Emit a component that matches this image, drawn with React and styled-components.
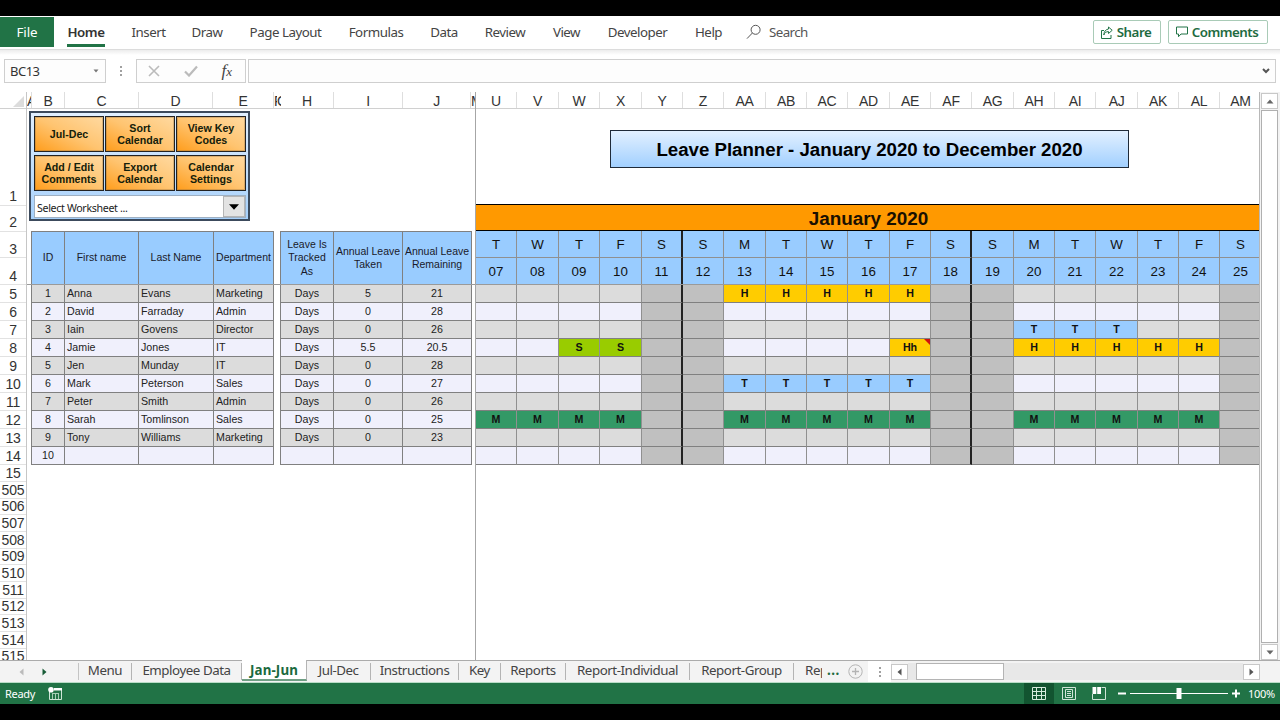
import React from 'react';
import styled, { createGlobalStyle } from 'styled-components';

const ui = '"Noto Sans", "Open Sans", sans-serif';
const sheet = '"Liberation Sans", Arial, sans-serif';

const ribbonTabs = [
    { label: 'Home', width: 38, active: true },
    { label: 'Insert', width: 31 },
    { label: 'Draw', width: 30 },
    { label: 'Page Layout', width: 71 },
    { label: 'Formulas', width: 54 },
    { label: 'Data', width: 26 },
    { label: 'Review', width: 40 },
    { label: 'View', width: 27 },
    { label: 'Developer', width: 59 },
    { label: 'Help', width: 27 },
];

const leftColumns = [
    ['A', 5], ['B', 33], ['C', 74], ['D', 74], ['E', 61], ['F', 3], ['G', 4],
    ['H', 53], ['I', 69], ['J', 68], ['M', 5],
];

const days = [
    { col: 'U', day: 'T', date: '07', width: 41 },
    { col: 'V', day: 'W', date: '08', width: 42 },
    { col: 'W', day: 'T', date: '09', width: 41 },
    { col: 'X', day: 'F', date: '10', width: 42 },
    { col: 'Y', day: 'S', date: '11', width: 41, off: true, weekEnd: true },
    { col: 'Z', day: 'S', date: '12', width: 41, off: true },
    { col: 'AA', day: 'M', date: '13', width: 42 },
    { col: 'AB', day: 'T', date: '14', width: 41 },
    { col: 'AC', day: 'W', date: '15', width: 41 },
    { col: 'AD', day: 'T', date: '16', width: 42 },
    { col: 'AE', day: 'F', date: '17', width: 41 },
    { col: 'AF', day: 'S', date: '18', width: 41, off: true, weekEnd: true },
    { col: 'AG', day: 'S', date: '19', width: 42, off: true },
    { col: 'AH', day: 'M', date: '20', width: 41 },
    { col: 'AI', day: 'T', date: '21', width: 41 },
    { col: 'AJ', day: 'W', date: '22', width: 42 },
    { col: 'AK', day: 'T', date: '23', width: 41 },
    { col: 'AL', day: 'F', date: '24', width: 41 },
    { col: 'AM', day: 'S', date: '25', width: 42, off: true },
];

const employees = [
    { first: 'Anna', last: 'Evans', dept: 'Marketing', taken: '5', left: '21', leave: { 13: 'H', 14: 'H', 15: 'H', 16: 'H', 17: 'H' } },
    { first: 'David', last: 'Farraday', dept: 'Admin', taken: '0', left: '28' },
    { first: 'Iain', last: 'Govens', dept: 'Director', taken: '0', left: '26', leave: { 20: 'T', 21: 'T', 22: 'T' } },
    { first: 'Jamie', last: 'Jones', dept: 'IT', taken: '5.5', left: '20.5', leave: { '09': 'S', 10: 'S', 17: 'Hh', 20: 'H', 21: 'H', 22: 'H', 23: 'H', 24: 'H' } },
    { first: 'Jen', last: 'Munday', dept: 'IT', taken: '0', left: '28' },
    { first: 'Mark', last: 'Peterson', dept: 'Sales', taken: '0', left: '27', leave: { 13: 'T', 14: 'T', 15: 'T', 16: 'T', 17: 'T' } },
    { first: 'Peter', last: 'Smith', dept: 'Admin', taken: '0', left: '26' },
    {
        first: 'Sarah', last: 'Tomlinson', dept: 'Sales', taken: '0', left: '25',
        leave: {
            '07': 'M', '08': 'M', '09': 'M', 10: 'M', 13: 'M', 14: 'M', 15: 'M',
            16: 'M', 17: 'M', 20: 'M', 21: 'M', 22: 'M', 23: 'M', 24: 'M',
        },
    },
    { first: 'Tony', last: 'Williams', dept: 'Marketing', taken: '0', left: '23' },
    {},
];

const leaveColors = { H: '#ffcc00', Hh: '#ffcc00', T: '#99ccff', S: '#99cc00', M: '#339966' };

const rowHeights = [
    ['1', 97, 1], ['2', 26, 1], ['3', 26], ['4', 27],
    ...Array.from({ length: 10 }, (_, i) => [String(i + 5), 18]),
    ['15', 17],
    ...Array.from({ length: 11 }, (_, i) => [String(i + 505), 16.67]),
];

const sheetTabs = [
    { label: 'Menu', width: 53 },
    { label: 'Employee Data', width: 110 },
    { label: 'Jan-Jun', width: 65, active: true },
    { label: 'Jul-Dec', width: 64 },
    { label: 'Instructions', width: 88 },
    { label: 'Key', width: 42 },
    { label: 'Reports', width: 65 },
    { label: 'Report-Individual', width: 124 },
    { label: 'Report-Group', width: 104 },
];

const macros = [
    ['Jul-Dec'], ['Sort', 'Calendar'], ['View Key', 'Codes'],
    ['Add / Edit', 'Comments'], ['Export', 'Calendar'], ['Calendar', 'Settings'],
];

const App = () => {
    return (
        <Window>
            <GlobalStyle />
            <Ribbon>
                <FileTab>File</FileTab>
                {ribbonTabs.map(tab => (
                    <RibbonTab key={tab.label} $width={tab.width} $active={tab.active}>{tab.label}</RibbonTab>
                ))}
                <Search>
                    <svg width="16" height="16" viewBox="0 0 16 16" fill="none" stroke="#555" strokeWidth="1">
                        <circle cx="9.6" cy="5.8" r="4.5" />
                        <path d="M6.4 9 L1 14.6" />
                    </svg>
                    Search
                </Search>
                <RibbonButton $width={68}>
                    <svg width="12" height="13" viewBox="0 0 12 13" fill="none" stroke="#217346" strokeWidth="1">
                        <path d="M3 4.5H.5v8h9.500V9" />
                        <path d="M7.500 1l3.700 3.300-3.700 3.200V5.600C5 5.600 3.600 6.800 2.800 9c.2-3.400 1.800-5.600 4.700-6z" />
                    </svg>
                    Share
                </RibbonButton>
                <RibbonButton $width={100}>
                    <svg width="12" height="12" viewBox="0 0 12 12" fill="none" stroke="#217346" strokeWidth="1">
                        <path d="M.5 1h11v7H5L2.500 10.700V8H.5z" />
                    </svg>
                    Comments
                </RibbonButton>
            </Ribbon>

            <FormulaBar>
                <NameBox>
                    BC13
                    <svg width="6" height="4" viewBox="0 0 6 4"><path d="M.5.500h5L3 3.500z" fill="#777" /></svg>
                </NameBox>
                <Dots><i /><i /><i /></Dots>
                <FormulaButtons>
                    <svg width="12" height="12" viewBox="0 0 12 12"><path d="M1 1l10 10M11 1L1 11" stroke="#bbb" strokeWidth="1.600" /></svg>
                    <svg width="14" height="12" viewBox="0 0 14 12"><path d="M1 6.500l4 4L13 1.500" fill="none" stroke="#bbb" strokeWidth="2.200" /></svg>
                    <Fx>f<small>x</small></Fx>
                </FormulaButtons>
                <FormulaInput>
                    <svg width="8" height="6" viewBox="0 0 8 6"><path d="M1 1l3 3 3-3" fill="none" stroke="#555" strokeWidth="2" /></svg>
                </FormulaInput>
            </FormulaBar>

            <Workbook>
                <RowHeaders>
                    <Corner>
                        <svg width="11" height="11" viewBox="0 0 11 11"><path d="M11 0v11H0z" fill="#dcdcdc" /></svg>
                    </Corner>
                    {rowHeights.map(([label, height, lift]) => (
                        <RowHeader key={label} $height={height} $lift={lift}>{label}</RowHeader>
                    ))}
                </RowHeaders>

                <LeftPane>
                    <ColumnHeaders>
                        {leftColumns.map(([label, width]) => (
                            <ColumnHeader key={label} $width={width}>{label}</ColumnHeader>
                        ))}
                    </ColumnHeaders>
                    <FrozenArea>
                        <ControlPanel>
                            <MacroGrid>
                                {macros.map(lines => (
                                    <MacroButton key={lines.join()}>
                                        {lines.map(line => <span key={line}>{line}</span>)}
                                    </MacroButton>
                                ))}
                            </MacroGrid>
                            <Combo>
                                <span>Select Worksheet ...</span>
                                <ComboArrow>
                                    <svg width="10" height="6" viewBox="0 0 10 6"><path d="M0 .300h10L5 5.700z" fill="#000" /></svg>
                                </ComboArrow>
                            </Combo>
                        </ControlPanel>
                        <Tables>
                            <StaffGrid>
                                <HeadCell>ID</HeadCell>
                                <HeadCell>First name</HeadCell>
                                <HeadCell>Last Name</HeadCell>
                                <HeadCell>Department</HeadCell>
                            </StaffGrid>
                            <AllowanceGrid>
                                <HeadCell>Leave Is<br />Tracked<br />As</HeadCell>
                                <HeadCell>Annual Leave<br />Taken</HeadCell>
                                <HeadCell>Annual Leave<br />Remaining</HeadCell>
                            </AllowanceGrid>
                        </Tables>
                    </FrozenArea>
                    {employees.map((person, i) => (
                        <Tables key={i}>
                            <StaffGrid>
                                <Cell $alt={i % 2} $center>{i + 1}</Cell>
                                <Cell $alt={i % 2}>{person.first}</Cell>
                                <Cell $alt={i % 2}>{person.last}</Cell>
                                <Cell $alt={i % 2}>{person.dept}</Cell>
                            </StaffGrid>
                            <AllowanceGrid>
                                <Cell $alt={i % 2} $center>{person.first && 'Days'}</Cell>
                                <Cell $alt={i % 2} $center>{person.taken}</Cell>
                                <Cell $alt={i % 2} $center>{person.left}</Cell>
                            </AllowanceGrid>
                        </Tables>
                    ))}
                </LeftPane>

                <CalendarPane>
                    <ColumnHeaders>
                        {days.map(d => <ColumnHeader key={d.col} $width={d.width}>{d.col}</ColumnHeader>)}
                    </ColumnHeaders>
                    <FrozenArea>
                        <TitleArea>
                            <Title>Leave Planner - January 2020 to December 2020</Title>
                        </TitleArea>
                        <Month>January 2020</Month>
                        <Row>
                            {days.map(d => <DayHead key={d.col} $width={d.width} $weekEnd={d.weekEnd} $line>{d.day}</DayHead>)}
                        </Row>
                        <Row>
                            {days.map(d => <DayHead key={d.col} $width={d.width} $weekEnd={d.weekEnd}>{d.date}</DayHead>)}
                        </Row>
                    </FrozenArea>
                    {employees.map((person, i) => (
                        <Row key={i}>
                            {days.map(d => {
                                const code = person.leave?.[d.date];
                                return (
                                    <DayCell key={d.col} $width={d.width} $alt={i % 2} $off={d.off} $weekEnd={d.weekEnd} $color={leaveColors[code]}>
                                        {code}
                                        {code === 'Hh' && <CommentMark />}
                                    </DayCell>
                                );
                            })}
                        </Row>
                    ))}
                </CalendarPane>

                <VerticalScroll>
                    <ScrollButton>
                        <svg width="8" height="5" viewBox="0 0 8 5"><path d="M4 .500L7.500 4.500h-7z" fill="#666" /></svg>
                    </ScrollButton>
                    <VerticalThumb />
                    <ScrollButton>
                        <svg width="8" height="5" viewBox="0 0 8 5"><path d="M4 4.500L7.500.500h-7z" fill="#666" /></svg>
                    </ScrollButton>
                </VerticalScroll>
            </Workbook>

            <TabStrip>
                <TabArrows>
                    <svg width="5" height="8" viewBox="0 0 5 8"><path d="M4.500.500v7L.5 4z" fill="#bbb" /></svg>
                    <svg width="5" height="8" viewBox="0 0 5 8"><path d="M.5.500v7L4.500 4z" fill="#185c37" /></svg>
                </TabArrows>
                {sheetTabs.map(tab => (
                    <SheetTab key={tab.label} $width={tab.width} $active={tab.active}>{tab.label}</SheetTab>
                ))}
                <CutTab>Rep</CutTab>
                <More>...</More>
                <AddSheet>
                    <svg width="15" height="15" viewBox="0 0 15 15" fill="none" stroke="#b4b4b4">
                        <circle cx="7.500" cy="7.500" r="6.700" />
                        <path d="M7.500 4v7M4 7.500h7" strokeWidth="1.300" />
                    </svg>
                </AddSheet>
                <ScrollSplit><Dots $tight><i /><i /><i /></Dots></ScrollSplit>
                <ScrollButton>
                    <svg width="5" height="8" viewBox="0 0 5 8"><path d="M4.500.500v7L.5 4z" fill="#555" /></svg>
                </ScrollButton>
                <HorizontalTrack><HorizontalThumb /></HorizontalTrack>
                <ScrollButton>
                    <svg width="5" height="8" viewBox="0 0 5 8"><path d="M.5.500v7L4.500 4z" fill="#555" /></svg>
                </ScrollButton>
            </TabStrip>

            <StatusBar>
                <Ready>Ready</Ready>
                <svg width="15" height="13" viewBox="0 0 15 13">
                    <path d="M1.500 5v7.500h12V1.500H6" fill="none" stroke="#cfe5d7" />
                    <path d="M6 1h8v2.500H6z" fill="#fff" />
                    <path d="M4 6.500h7M4.500 6v6M7.500 6v6M10.500 6v6" stroke="#a5cdb4" />
                    <circle cx="3" cy="2.800" r="2.800" fill="#fff" />
                </svg>
                <Views>
                    <ViewButton $active>
                        <svg width="14" height="13" viewBox="0 0 14 13" fill="none" stroke="#d6ebdd">
                            <path d="M.5.500h13v12H.5zM4.500.500v12M9.500.500v12M.5 4.500h13M.5 8.500h13" />
                        </svg>
                    </ViewButton>
                    <ViewButton>
                        <svg width="14" height="13" viewBox="0 0 14 13" fill="none" stroke="#cfe5d7">
                            <path d="M.5.500h13v12H.5zM3.500 2.500h7v8h-7zM5 4.500h4M5 6.500h4M5 8.500h4" />
                        </svg>
                    </ViewButton>
                    <ViewButton>
                        <svg width="14" height="13" viewBox="0 0 14 13" fill="none" stroke="#cfe5d7">
                            <path d="M9.500.500h4v12H.5V7" />
                            <path d="M.5 0h3.800v7H.5zM5.200 0H9v7H5.200z" fill="#fff" stroke="none" />
                        </svg>
                    </ViewButton>
                </Views>
                <Zoom>
                    <svg width="124" height="14" viewBox="0 0 124 14" stroke="#fff">
                        <path d="M0 6.500h8M114 6.500h8M118 2.500v8" strokeWidth="2" />
                        <path d="M12 6.500h98" strokeWidth="1" />
                        <path d="M58.500 1h5v11h-5z" fill="#fff" stroke="none" />
                    </svg>
                    <span>100%</span>
                </Zoom>
            </StatusBar>
        </Window>
    )
}

export default App;

const GlobalStyle = createGlobalStyle`
  * {
    box-sizing: border-box;
  }
  body {
    margin: 0;
    background: #000;
  }
  svg {
    display: block;
    flex-shrink: 0;
  }
`;

const Window = styled.main`
  width: 1280px;
  height: 720px;
  padding: 16px 0;
  display: flex;
  flex-direction: column;
  overflow: hidden;
  background: #000;
  font-family: ${ui};
`;

const Ribbon = styled.header`
  height: 33px;
  flex-shrink: 0;
  display: flex;
  align-items: center;
  background: #fff;
  padding-right: 12px;
  color: #444;
  font-size: 13.33px;
  letter-spacing: -0.48px;
`;

const FileTab = styled.div`
  width: 54px;
  height: 30px;
  margin: 0 13px 1px 0;
  display: flex;
  align-items: center;
  justify-content: center;
  background: #217346;
  color: #fff;
  letter-spacing: -0.1px;
`;

const RibbonTab = styled.div`
  width: ${props => props.$width}px;
  height: 25px;
  margin: 4px 28px 0 0;
  flex-shrink: 0;
  display: flex;
  justify-content: center;
  white-space: nowrap;
  font-weight: ${props => props.$active ? 600 : 400};
  color: ${props => props.$active ? '#333' : '#444'};
  border-bottom: 3px solid ${props => props.$active ? '#217346' : 'transparent'};
  line-height: 19px;
  padding-top: 1px;
`;

const Search = styled.div`
  display: flex;
  align-items: center;
  gap: 7px;
  margin-right: auto;
  margin-left: -4px;
  padding-bottom: 1px;
  color: #555;
  letter-spacing: -0.6px;
`;

const RibbonButton = styled.button`
  width: ${props => props.$width}px;
  height: 24px;
  margin: 0 0 1px 7px;
  padding: 0 2px 0 0;
  display: flex;
  align-items: center;
  justify-content: center;
  gap: 4px;
  border: 1px solid #a9cbb7;
  border-radius: 2px;
  background: #fff;
  color: #1e6b41;
  font: 600 13.33px ${ui};
  letter-spacing: -0.5px;
`;

const FormulaBar = styled.div`
  height: 43px;
  flex-shrink: 0;
  display: flex;
  align-items: flex-start;
  padding: 9px 4px 0;
  border-top: 1px solid #dcdcdc;
  background: linear-gradient(#ececec, #fff 5px);
`;

const NameBox = styled.div`
  width: 102px;
  height: 24px;
  padding: 0 6px 0 5px;
  display: flex;
  align-items: center;
  justify-content: space-between;
  border: 1px solid #cfcfcf;
  background: #fdfdfd;
  color: #333;
  font-size: 13px;
  letter-spacing: -0.5px;
`;

const Dots = styled.div`
  width: ${props => props.$tight ? 2 : 30}px;
  height: ${props => props.$tight ? 10 : 24}px;
  display: flex;
  flex-direction: column;
  align-items: center;
  justify-content: center;
  gap: 2px;

  i {
    width: 2px;
    height: 2px;
    flex-shrink: 0;
    background: #a0a0a0;
  }
`;

const FormulaButtons = styled.div`
  width: 110px;
  height: 24px;
  padding: 0 13px 0 11px;
  display: flex;
  align-items: center;
  justify-content: space-between;
  border: 1px solid #cfcfcf;
  background: #fdfdfd;
`;

const Fx = styled.span`
  font: italic 17px/20px "Liberation Serif", serif;
  color: #444;

  small {
    font-size: 13px;
  }
`;

const FormulaInput = styled.div`
  flex: 1;
  height: 24px;
  margin-left: 2px;
  padding-right: 5px;
  display: flex;
  align-items: center;
  justify-content: flex-end;
  border: 1px solid #cfcfcf;
  background: #fdfdfd;
`;

const Workbook = styled.section`
  height: 568px;
  flex-shrink: 0;
  display: flex;
  background: #fff;
  overflow: hidden;
  font-family: ${sheet};
`;

const RowHeaders = styled.div`
  width: 27px;
  flex-shrink: 0;
  border-right: 1px solid #c6c6c6;
`;

const Corner = styled.div`
  height: 17px;
  display: flex;
  justify-content: flex-end;
  padding: 4px 2px 0 0;
  border-bottom: 1px solid #d0d0d0;
`;

const RowHeader = styled.div`
  height: ${props => props.$height}px;
  display: flex;
  align-items: flex-end;
  justify-content: center;
  line-height: 16px;
  padding-bottom: ${props => props.$lift || 0}px;
  font-size: 14px;
  letter-spacing: -0.2px;
  color: #333;
  border-bottom: 1px solid #e2e2e2;
`;

const LeftPane = styled.div`
  width: 449px;
  flex-shrink: 0;
  border-right: 1px solid #a6a6a6;
`;

const CalendarPane = styled.div`
  width: 784px;
  flex-shrink: 0;
  overflow: hidden;
  border-right: 1px solid #b8b8b8;
`;

const ColumnHeaders = styled.div`
  height: 17px;
  display: flex;
  overflow: hidden;
  border-bottom: 1px solid #d0d0d0;
`;

/* columns squeezed to a few pixels show only the start of their letter */
const ColumnHeader = styled.div`
  width: ${props => props.$width}px;
  flex-shrink: 0;
  overflow: hidden;
  display: flex;
  justify-content: ${props => props.$width < 10 ? 'flex-start' : 'center'};
  font-size: 14px;
  letter-spacing: -0.3px;
  line-height: 19px;
  color: #333;
  border-right: ${props => props.$width < 5 ? 'none' : '1px solid #dedede'};
`;

const FrozenArea = styled.div`
  height: 176px;
  display: flex;
  flex-direction: column;
  border-bottom: 1px solid #9a9a9a;
`;

const ControlPanel = styled.div`
  width: 221px;
  height: 110px;
  margin: 2px 0 10px 2px;
  padding: 3px 3px 1px;
  flex-shrink: 0;
  display: flex;
  flex-direction: column;
  justify-content: space-between;
  border: 2px solid #3c4a5c;
  background: linear-gradient(#e0efff, #a6d0fb);
`;

const MacroGrid = styled.div`
  display: grid;
  grid-template-columns: repeat(3, 70px);
  grid-auto-rows: 36px;
  gap: 3px 1px;
`;

const MacroButton = styled.button`
  padding: 0;
  display: flex;
  flex-direction: column;
  align-items: center;
  justify-content: center;
  border: 1px solid #222;
  box-shadow: inset 0 0 0 1px #8a6a3c55;
  background: linear-gradient(to top right, #ff9d1c, #ffc470 50%, #ffd9a0);
  color: #14200a;
  font: bold 10.67px/12px ${sheet};
`;

const Combo = styled.div`
  height: 23px;
  width: 212px;
  display: flex;
  align-items: center;
  justify-content: space-between;
  padding-left: 2px;
  border: 1px solid #9fb0c2;
  background: #fff;
  color: #222;
  font: 10.67px ${ui};
  letter-spacing: -0.35px;

  span {
    padding-top: 2px;
  }
`;

const ComboArrow = styled.div`
  width: 22px;
  height: 21px;
  display: flex;
  align-items: center;
  justify-content: center;
  border: 1px solid #b5b5b5;
  background: #e3e3e3;
`;

const Tables = styled.div`
  display: flex;
  gap: 6px;
  padding-left: 4px;
`;

const StaffGrid = styled.div`
  display: grid;
  grid-template-columns: 33px 74px 75px 60px;
  border-left: 1px solid #808080;
`;

const AllowanceGrid = styled.div`
  display: grid;
  grid-template-columns: 53px 69px 69px;
  border-left: 1px solid #808080;
`;

const HeadCell = styled.div`
  height: 53px;
  display: flex;
  align-items: center;
  justify-content: center;
  text-align: center;
  white-space: nowrap;
  font-size: 10.5px;
  line-height: 13.3px;
  color: #1a1a2a;
  background: #99ccff;
  border-top: 1px solid #808080;
  border-right: 1px solid #808080;
`;

const Cell = styled.div`
  height: 18px;
  padding-left: ${props => props.$center ? 0 : 2}px;
  text-align: ${props => props.$center ? 'center' : 'left'};
  font-size: 10.67px;
  line-height: 17px;
  color: #222;
  background: ${props => props.$alt ? '#f0f0fc' : '#dcdcdc'};
  border-right: 1px solid #808080;
  border-bottom: 1px solid #808080;
`;

const TitleArea = styled.div`
  height: 95px;
  flex-shrink: 0;
  padding: 21px 0 0 134px;
`;

const Title = styled.h1`
  width: 519px;
  height: 38px;
  margin: 0;
  text-align: center;
  font-size: 18.67px;
  line-height: 37px;
  color: #000;
  border: 1px solid #1f2a38;
  background: linear-gradient(#e2f0ff, #a2d0ff);
`;

const Month = styled.h2`
  height: 27px;
  flex-shrink: 0;
  margin: 0;
  text-align: center;
  font-size: 18.9px;
  line-height: 27px;
  padding-left: 2px;
  color: #1a1000;
  background: #ff9900;
  border-top: 1px solid #000;
  border-bottom: 1px solid #000;
`;

const Row = styled.div`
  display: flex;
`;

const DayBox = styled.div`
  width: ${props => props.$width}px;
  flex-shrink: 0;
  text-align: center;
  border-right: ${props => props.$weekEnd ? '2px solid #222' : '1px solid #909090'};
`;

const DayHead = styled(DayBox)`
  height: ${props => props.$line ? 27 : 26}px;
  font-size: 13.33px;
  line-height: 28px;
  color: #111;
  background: #99ccff;
  border-bottom: ${props => props.$line ? '1px solid #909090' : 'none'};
`;

const DayCell = styled(DayBox)`
  position: relative;
  height: 18px;
  font-size: 10.67px;
  line-height: 17px;
  font-weight: bold;
  color: #111;
  background: ${({ $color, $off, $alt }) => $color || ($off ? '#c0c0c0' : $alt ? '#f0f0fc' : '#dcdcdc')};
  border-bottom: 1px solid #808080;
`;

const CommentMark = styled.span`
  position: absolute;
  top: 0;
  right: 0;
  border-top: 6px solid #d01010;
  border-left: 6px solid transparent;
`;

const VerticalScroll = styled.div`
  flex: 1;
  padding: 1px 2px 0 1px;
  display: flex;
  flex-direction: column;
  gap: 1px;
  background: #f3f3f3;
`;

const ScrollButton = styled.div`
  width: 17px;
  height: 16px;
  flex-shrink: 0;
  display: flex;
  align-items: center;
  justify-content: center;
  border: 1px solid #c8c8c8;
  background: #fff;
`;

const VerticalThumb = styled.div`
  width: 17px;
  flex: 1;
  border: 1px solid #b0b0b0;
  background: #fff;
`;

const TabStrip = styled.nav`
  height: 23px;
  flex-shrink: 0;
  display: flex;
  align-items: center;
  border-top: 1px solid #ababab;
  border-bottom: 1px solid #b9dcc7;
  background: #f3f3f3;
  font-size: 13.33px;
  letter-spacing: -0.4px;
  color: #444;
`;

const TabArrows = styled.div`
  width: 79px;
  height: 17px;
  padding-left: 19px;
  display: flex;
  align-items: center;
  gap: 18px;
  border-right: 1px solid #c4c4c4;
`;

const SheetTab = styled.div`
  width: ${props => props.$width}px;
  height: ${props => props.$active ? 21 : 17}px;
  margin-top: ${props => props.$active ? -2 : 0}px;
  flex-shrink: 0;
  display: flex;
  justify-content: center;
  line-height: ${props => props.$active ? 21 : 14}px;
  white-space: nowrap;
  color: ${props => props.$active ? '#1a6a3e' : '#444'};
  font-weight: ${props => props.$active ? 700 : 400};
  letter-spacing: ${props => props.$active ? 0.15 : -0.45}px;
  background: ${props => props.$active ? '#fff' : 'transparent'};
  border-right: 1px solid #b4b4b4;
  border-bottom: ${props => props.$active ? '2px solid #6f9f84' : 'none'};
`;

const CutTab = styled.div`
  width: 28px;
  height: 17px;
  padding-left: 11px;
  line-height: 14px;
  overflow: hidden;
  flex-shrink: 0;
`;

const More = styled.div`
  width: 26px;
  height: 17px;
  padding-left: 5px;
  line-height: 14px;
  flex-shrink: 0;
  font-weight: 700;
  letter-spacing: 0.5px;
  color: #1e6b41;
`;

const AddSheet = styled.div`
  width: 20px;
  flex-shrink: 0;
`;

const ScrollSplit = styled.div`
  width: 23px;
  height: 21px;
  flex-shrink: 0;
  display: flex;
  align-items: center;
  justify-content: center;
  background: #fff;
`;

const HorizontalTrack = styled.div`
  width: 335px;
  height: 17px;
  flex-shrink: 0;
  padding-left: 8px;
  background: #e8e8e8;
`;

const HorizontalThumb = styled.div`
  width: 88px;
  height: 17px;
  border: 1px solid #b4b4b4;
  background: #fff;
`;

const StatusBar = styled.footer`
  height: 21px;
  flex-shrink: 0;
  display: flex;
  align-items: center;
  background: #217346;
  color: #fff;
  font-size: 11px;
  letter-spacing: -0.3px;
`;

const Ready = styled.div`
  width: 43px;
  margin-right: 5px;
  padding-left: 5px;
`;

const Views = styled.div`
  height: 100%;
  margin-left: auto;
  display: flex;
`;

const ViewButton = styled.div`
  width: 30px;
  display: flex;
  align-items: center;
  justify-content: center;
  background: ${props => props.$active ? '#125430' : 'transparent'};
`;

const Zoom = styled.div`
  width: 162px;
  margin-left: 4px;
  display: flex;
  align-items: center;
  gap: 6px;
`;
